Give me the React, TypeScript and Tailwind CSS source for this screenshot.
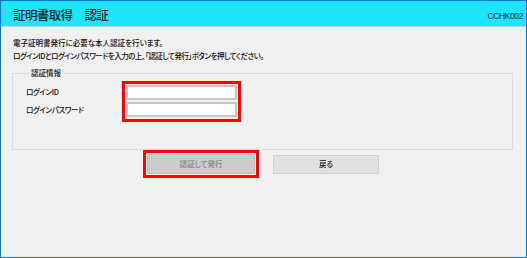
import React from 'react';

const jp = "font-['Noto_Sans_CJK_JP','Noto_Sans',sans-serif] [font-feature-settings:'palt']";

const App: React.FC = () => {
  return (
    <div className={`w-[527px] h-[258px] bg-[#f0f0f0] border border-[#0b76cf] flex flex-col ${jp}`}>
      {/* Header */}
      <div className="h-[26px] bg-[#1de6fa] border-b border-[#b8d8dc] flex items-end justify-between pl-[12px] pr-[3px]">
        <h1 className="text-[12.5px] leading-[16px] mb-[3px] text-[#0a1f28] font-medium tracking-[-0.6px]">
          証明書取得　認証
        </h1>
        <span className="font-['Liberation_Sans',Arial,sans-serif] text-[8.5px] leading-[10px] mb-[5px] text-[#14303c] tracking-[-0.4px]">
          CCHK002
        </span>
      </div>

      {/* Body */}
      <div className="px-[11px] pt-[9px] flex flex-col text-[#111] font-medium">
        <p className="text-[7.5px] leading-[13px] pl-[1px]">
          電子証明書発行に必要な本人認証を行います。
          <br />
          <span className="tracking-[-0.5px]">ログインIDとログインパスワードを入力の上、「認証して発行」ボタンを押してください。</span>
        </p>

        <fieldset className="mt-[5px] w-[501px] h-[83px] border border-[#dcdcdc] pl-[13px]">
          <legend className="ml-[3px] px-[2px] text-[7.5px] leading-[12px]">認証情報</legend>
          <div className="flex mt-[2px]">
            <div className="w-[96px] flex flex-col text-[7.5px] leading-[12px] pt-[5px] tracking-[-0.4px]">
              <span className="h-[18px]">ログインID</span>
              <span className="h-[18px]">ログインパスワード</span>
            </div>
            <div className="border-[3px] border-[#ff0000] p-[1px] flex flex-col gap-[2px]">
              <input className="w-[111px] h-[15px] bg-white border-2 border-[#c6c6c6] outline-none" />
              <input className="w-[111px] h-[15px] bg-white border-2 border-[#c6c6c6] outline-none" />
            </div>
          </div>
        </fieldset>

        {/* Buttons */}
        <div className="flex items-center ml-[131px] gap-[14px]">
          <div className="border-[3px] border-[#ff0000] p-[1px]">
            <button className="w-[108px] h-[20px] bg-[#cccccc] border border-[#bfbfbf] text-[7.5px] text-[#838383] flex items-center justify-center">
              認証して発行
            </button>
          </div>
          <button className="w-[106px] h-[19px] bg-[#e1e1e1] border border-[#cfcfcf] text-[7.5px] text-[#111] flex items-center justify-center">
            戻る
          </button>
        </div>
      </div>
    </div>
  );
};

export default App;
